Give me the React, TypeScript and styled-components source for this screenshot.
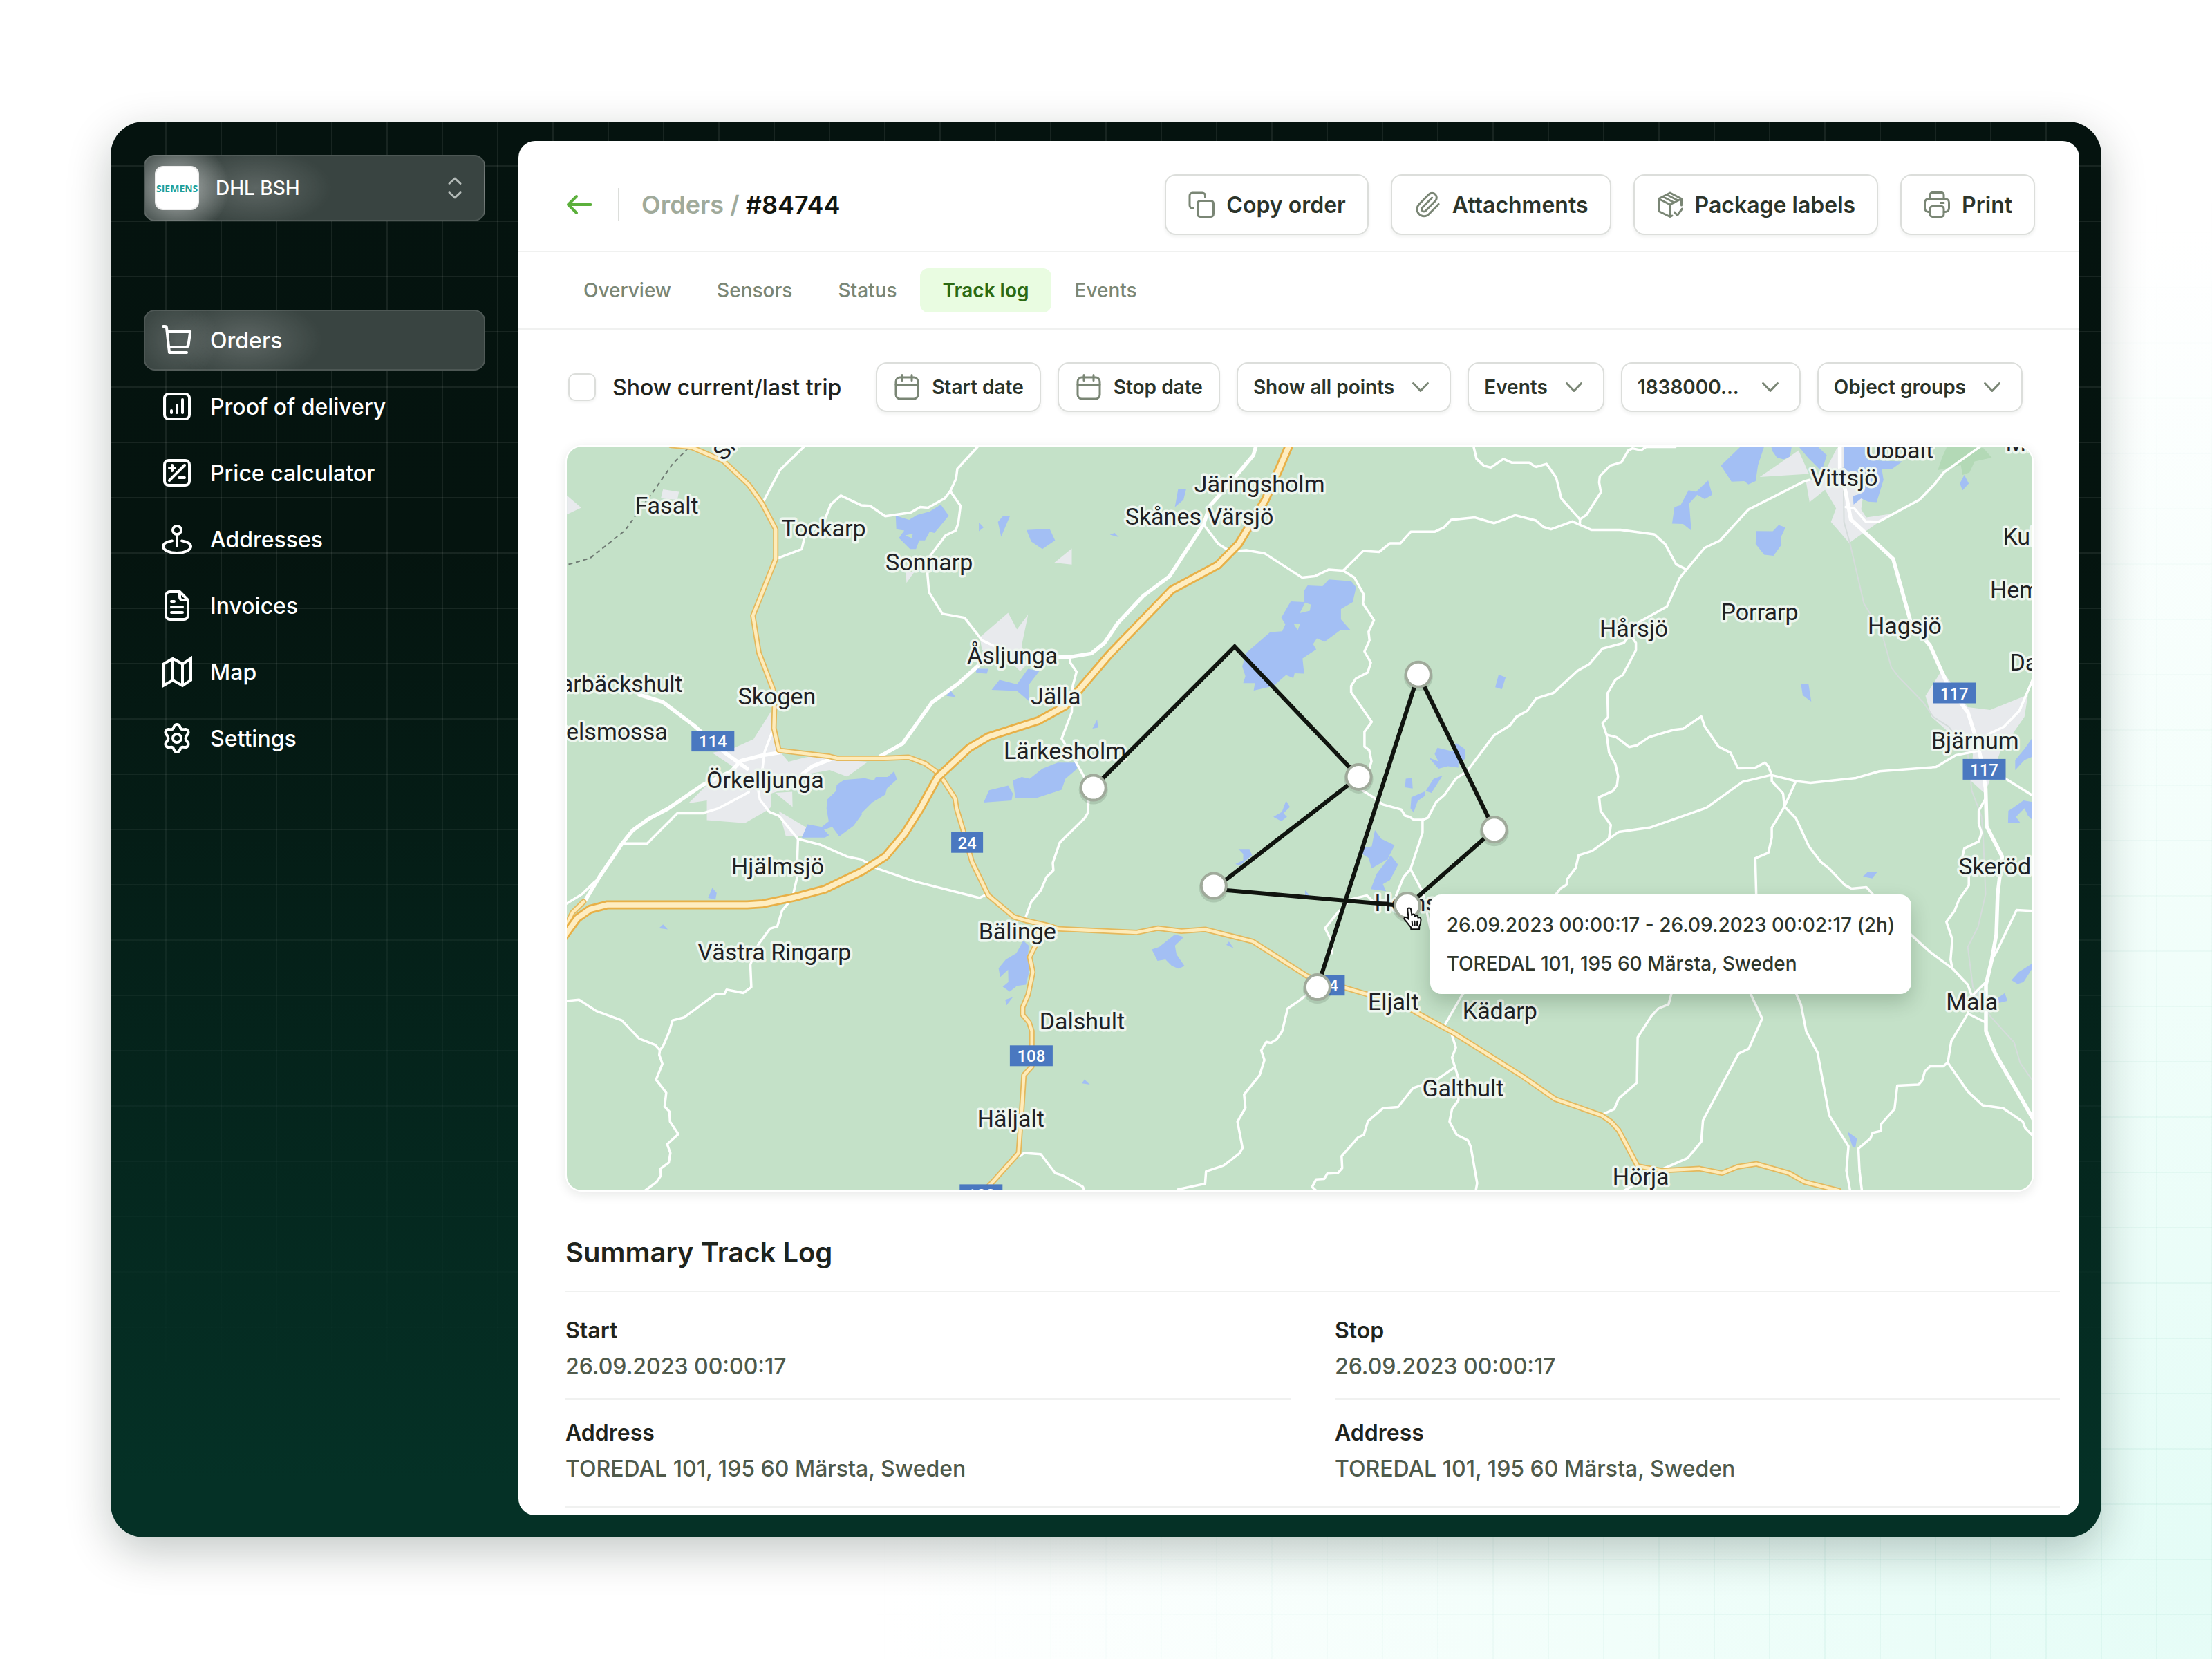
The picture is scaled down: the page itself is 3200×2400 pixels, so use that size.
import React from "react";
import styled, { createGlobalStyle, css } from "styled-components";

const color = {
  ink: "#1f241d",
  inkSoft: "#2c342a",
  muted: "#4f5a4b",
  sage: "#7a8675",
  sageLight: "#a0aa9b",
  line: "#f0f1f0",
  border: "#dcdedb",
  green: "#5cb03c",
};

const GlobalStyle = createGlobalStyle`
  *, *::before, *::after { box-sizing: border-box; }
  body {
    margin: 0;
    background: #fff;
    color: ${color.ink};
    font-family: Inter, "Liberation Sans", sans-serif;
    -webkit-font-smoothing: antialiased;
  }
  button, input, select { font: inherit; color: inherit; }
`;

/* ---------- Page shell ---------- */

const Page = styled.div`
  position: relative;
  display: flex;
  height: 100vh;
  padding: 176px 160px;
  background:
    radial-gradient(ellipse 60% 80% at 100% 94%, #e4fcf6 0%, #f1fefa 45%, rgba(255, 255, 255, 0) 100%),
    #fff;

  &::before {
    content: "";
    position: absolute;
    inset: 0;
    background-image:
      linear-gradient(to right, rgba(20, 150, 120, 0.05) 2px, transparent 2px),
      linear-gradient(to bottom, rgba(20, 150, 120, 0.05) 2px, transparent 2px);
    background-size: 80px 80px;
    background-position: -1px 15px;
    mask-image: radial-gradient(ellipse 62% 86% at 100% 96%, #000 30%, transparent 100%);
  }
`;

const Shell = styled.div`
  position: relative;
  display: flex;
  flex: 1;
  min-width: 0;
  padding: 28px 32px 32px 0;
  border-radius: 48px;
  overflow: hidden;
  background: linear-gradient(180deg, #05130f 0%, #05140f 30%, #053126 96%);

  &::before {
    content: "";
    position: absolute;
    inset: 0;
    background-image:
      linear-gradient(to right, rgba(255, 255, 255, 0.08) 2px, transparent 2px),
      linear-gradient(to bottom, rgba(255, 255, 255, 0.08) 2px, transparent 2px);
    background-size: 80px 80px;
    background-position: -1px -17px;
    mask-image: linear-gradient(180deg, #000 35%, transparent 92%);
  }
`;

const ShellShadow = styled.div`
  position: relative;
  display: flex;
  flex: 1;
  min-width: 0;
  border-radius: 48px;
  box-shadow: 0 20px 64px rgba(6, 24, 18, 0.24);
`;

/* ---------- Sidebar ---------- */

const Sidebar = styled.aside`
  position: relative;
  display: flex;
  flex: none;
  flex-direction: column;
  gap: 128px;
  width: 590px;
  padding: 20px 48px;
`;

const glass = css`
  border: 2px solid rgba(255, 255, 255, 0.1);
  background-color: #394441;
`;

const Account = styled.button`
  display: flex;
  align-items: center;
  gap: 24px;
  height: 96px;
  padding: 0 18px 0 14px;
  border-radius: 16px;
  color: #fff;
  font-size: 28px;
  font-weight: 500;
  ${glass}
  background-image:
    radial-gradient(ellipse 76px 70px at 46px 46px, rgba(255, 255, 255, 0.62), rgba(255, 255, 255, 0) 100%),
    radial-gradient(ellipse 110px 56px at 160px 46px, rgba(255, 255, 255, 0.18), rgba(255, 255, 255, 0) 100%);
`;

const AccountLogo = styled.span`
  display: grid;
  place-items: center;
  width: 64px;
  height: 64px;
  border: 2px solid #ececec;
  border-radius: 12px;
  background: #fff;
  color: #1d9f9b;
  font-family: "Open Sans", sans-serif;
  font-size: 14px;
  font-weight: 700;
`;

const AccountName = styled.span`
  flex: 1;
  text-align: left;
`;

const NavList = styled.ul`
  display: flex;
  flex-direction: column;
  gap: 8px;
  margin: 0;
  padding: 0;
  list-style: none;
`;

const NavLink = styled.a<{ $active?: boolean }>`
  display: flex;
  align-items: center;
  gap: 24px;
  height: 88px;
  padding: 0 22px;
  border: 2px solid transparent;
  border-radius: 16px;
  color: #fff;
  font-size: 32px;
  font-weight: 500;
  text-decoration: none;
  ${(p) =>
    p.$active &&
    css`
      ${glass}
      background-image:
        radial-gradient(ellipse 60px 60px at 46px 42px, rgba(255, 255, 255, 0.14), rgba(255, 255, 255, 0) 100%),
        radial-gradient(ellipse 110px 60px at 146px 42px, rgba(255, 255, 255, 0.18), rgba(255, 255, 255, 0) 100%);
    `}
`;

/* ---------- Main panel ---------- */

const Panel = styled.main`
  position: relative;
  display: flex;
  flex: 1;
  flex-direction: column;
  min-width: 0;
  overflow: hidden;
  border-radius: 24px;
  background: #fff;
`;

const Header = styled.header`
  display: flex;
  align-items: center;
  justify-content: space-between;
  gap: 32px;
  padding: 48px 64px 23px;
  border-bottom: 2px solid ${color.line};
`;

const Row = styled.div<{ $gap: number }>`
  display: flex;
  align-items: center;
  gap: ${(p) => p.$gap}px;
`;

const BackLink = styled.a`
  display: flex;
  color: ${color.green};
`;

const Separator = styled.span`
  width: 2px;
  height: 48px;
  background: ${color.border};
`;

const Title = styled.h1`
  margin: 0;
  font-size: 36px;
  font-weight: 600;
  line-height: 48px;
  color: #11150f;
`;

const Crumb = styled.a`
  color: ${color.sageLight};
  text-decoration: none;
`;

const outlined = css`
  border: 2px solid ${color.border};
  border-radius: 16px;
  background: #fff;
  color: ${color.inkSoft};
  font-weight: 600;
  white-space: nowrap;
  box-shadow: 0 3px 5px rgba(20, 30, 20, 0.06);
`;

const Button = styled.button<{ $small?: boolean }>`
  ${outlined}
  display: flex;
  align-items: center;
  gap: 16px;
  height: ${(p) => (p.$small ? 72 : 88)}px;
  padding: 0 ${(p) => (p.$small ? 23 : 31)}px;
  font-size: ${(p) => (p.$small ? 28 : 32)}px;
`;

const SelectBox = styled.label`
  ${outlined}
  display: flex;
  align-items: center;
  height: 72px;
  padding-right: 22px;
  font-size: 28px;
`;

const Select = styled.select<{ $width?: number }>`
  appearance: none;
  field-sizing: content;
  width: ${(p) => (p.$width ? `${p.$width}px` : "auto")};
  height: 100%;
  margin-right: -40px;
  padding: 0 58px 0 22px;
  border: 0;
  outline: 0;
  background: transparent;
`;

const Tabs = styled.nav`
  display: flex;
  gap: 2px;
  padding: 23px 62px;
  border-bottom: 2px solid ${color.line};
`;

const Tab = styled.a<{ $active?: boolean }>`
  padding: 0 32px;
  border-radius: 12px;
  background: ${(p) => (p.$active ? "#e9fce1" : "transparent")};
  color: ${(p) => (p.$active ? "#2b6a12" : color.sage)};
  font-size: 28px;
  font-weight: ${(p) => (p.$active ? 600 : 500)};
  line-height: 64px;
  text-decoration: none;
`;

const Filters = styled.form`
  display: flex;
  align-items: center;
  justify-content: space-between;
  padding: 47px 82px 48px 72px;
`;

const CheckLabel = styled.label`
  display: flex;
  align-items: center;
  gap: 24px;
  font-size: 32px;
  font-weight: 500;
`;

const CheckBox = styled.input`
  appearance: none;
  width: 40px;
  height: 40px;
  margin: 0;
  border: 2px solid ${color.border};
  border-radius: 10px;
  background: #fff;
  box-shadow: 0 2px 4px rgba(20, 30, 20, 0.06);
`;

/* ---------- Map ---------- */

const MapFrame = styled.section`
  position: relative;
  flex: none;
  margin: 0 66px 0 68px;
  aspect-ratio: 2124 / 1080;
  border: 2px solid #fff;
  border-radius: 24px;
  box-shadow: 0 4px 16px rgba(20, 30, 20, 0.1);
`;

const MapCanvas = styled.svg`
  display: block;
  width: 100%;
  height: 100%;
  border-radius: 22px;
  background: #c4e1c8;
`;

const PlaceLabel = styled.text`
  font-family: Roboto, sans-serif;
  font-size: 34px;
  fill: #202124;
  stroke: #eef6ef;
  stroke-width: 7px;
  stroke-linejoin: round;
  paint-order: stroke;
`;

const ShieldLabel = styled.text`
  font-family: Roboto, sans-serif;
  font-size: 24px;
  font-weight: 500;
  fill: #fff;
  text-anchor: middle;
`;

const Tooltip = styled.div`
  position: absolute;
  top: 60.2%;
  left: 58.9%;
  padding: 16px 24px;
  border-radius: 16px;
  background: #fff;
  color: #2f372c;
  font-size: 28px;
  font-weight: 500;
  line-height: 56px;
  white-space: nowrap;
  box-shadow: 0 12px 28px rgba(20, 50, 25, 0.22);
`;

/* The map is surveyed in six overlapping sheets, each with its own origin and scale. */
type Sheet = { x: number; y: number; sx: number; sy: number };
const sheets: Record<string, Sheet> = {
  A: { x: -10, y: -16, sx: 2.1778, sy: 2.8 },
  B: { x: 680, y: -16, sx: 2.1778, sy: 2.8 },
  C: { x: 1380, y: -16, sx: 2.0103, sy: 2.8 },
  D: { x: -10, y: 524, sx: 2.1778, sy: 2.7509 },
  E: { x: 680, y: 524, sx: 2.1778, sy: 2.7509 },
  F: { x: 1380, y: 524, sx: 2.0103, sy: 2.7509 },
};

function at(sheet: string, u: number, v: number): [number, number] {
  const s = sheets[sheet];
  return [Math.round((s.x + u / s.sx) * 10) / 10, Math.round((s.y + v / s.sy) * 10) / 10];
}

function trace(data: string): string {
  let sheet = "A";
  const out: string[] = [];
  data.split(/\s+/).forEach((token) => {
    if (sheets[token]) {
      sheet = token;
      return;
    }
    const [u, v] = token.split(",").map(Number);
    out.push(at(sheet, u, v).join(","));
  });
  return out.join(" ");
}

const towns = [
  "A 22,243 67,293 22,320",
  "A 325,218 375,228 370,260 318,255",
  "A 1412,718 1440,785 1475,725 1455,850 1470,930 1450,955 1430,930 1330,870 1323,818",
  "A 1090,555 1118,550 1092,597",
  "A 665,1118 672,1190 690,1275 720,1322 770,1305 830,1290 850,1310 970,1322 905,1382 850,1355 780,1372 740,1420 665,1450 665,1505 D 655,5 583,57 463,45 A 463,1478 405,1490 460,1420 550,1345 480,1285 550,1265 610,1230",
  "A 678,1448 732,1443 733,1505",
  "D 690,10 777,75 765,110 712,110",
  "B 55,515 110,458 110,523",
  "C 808,60 838,155 695,168",
  "C 905,90 920,50 940,46 940,130 1000,200 990,300 1005,332 1075,318 955,435 902,350 917,295 885,220 840,270 830,190 880,160",
  "C 1177,1055 1225,950 1300,1100 1365,1112 1475,1050 1465,1140 1395,1280 1350,1450 1310,1400 1315,1290 1195,1140",
];

const parks = ["C 1240,44 1345,50 1370,90 1320,105 1305,150 1285,160 1280,120 1213,140 1225,90"];

const lakes = [
  "A 1058,325 1100,342 1125,322 1165,308 1200,280 1225,325 1180,395 1165,390 1150,425 1132,425 1122,460 1103,460 1068,415 1085,385 1060,380",
  "A 1320,352 1335,372 1320,388",
  "A 1395,328 1418,326 1390,410 1380,350",
  "A 1470,383 1543,378 1560,425 1520,460 1485,430",
  "A 1385,990 1440,1008 1475,945 1510,955 1477,1010 1477,1075 1440,1035 1360,1030",
  "A 1310,945 1350,945 1345,965 1312,962",
  "A 1230,1032 1247,1060 1218,1055",
  "A 1335,1487 1352,1437 1412,1418 1427,1450 1423,1478",
  "A 1427,1397 1455,1383 1480,1390 1520,1350 1568,1325 B 125,1325 127,1350 90,1390 78,1435 0,1468 A 1435,1468",
  "A 842,1475 870,1440 872,1415 895,1395 960,1388 990,1397 995,1383 1033,1383 1053,1360 1062,1393 1030,1430 1025,1455 985,1485 950,1530 D 953,20 925,68 880,110 858,72 832,83 848,105 835,115 762,115 780,62 825,72 847,50 840,0",
  "D 480,315 494,335 490,362 467,355",
  "D 325,460 340,480 312,475",
  "D 1460,525 1477,545 1475,580 1480,640 1468,700 1440,705 1417,728 1395,708 1413,690 1412,640 1387,670 1382,635 1405,600 1438,575",
  "D 1403,760 1427,750 1407,782",
  "B 470,218 462,260 435,290 445,218",
  "B 230,402 245,395 258,412",
  "B 920,583 990,590 1006,615 995,675 958,703 958,745 988,788 955,790 907,835 882,822 870,845 880,867 837,903 842,965 812,963 808,983 785,970 745,1015 683,1033 687,1003 650,1003 657,975 647,935 660,880 735,797 773,793 783,765 770,738 800,672 843,675 841,630 853,608 900,610",
  "B 1455,968 1477,980 1465,1028 1444,1020",
  "B 190,1150 193,1183 175,1187",
  "B 1262,1265 1310,1280 1320,1245 1350,1272 1348,1310 1328,1325 1328,1345 1295,1340 1265,1350 1235,1305 1265,1320 1253,1290",
  "B 1162,1390 1182,1387 1184,1430 1160,1425",
  "B 1225,1440 1250,1390 1278,1378 1243,1448",
  "B 1180,1465 1222,1442 1222,1460 1200,1480 1187,1527 1177,1510",
  "B 785,1480 797,1505 777,1530 788,1545 770,1562 745,1545 772,1525",
  "E 1065,85 1085,120 1127,145 1105,200 1055,237 1045,195 1025,180 1030,155 1055,150",
  "E 1115,185 1138,222 1112,285 1090,300 1100,328 1052,320 1070,260",
  "E 635,160 670,160 678,185 640,225 625,220 650,205 650,180",
  "E 845,325 860,345 845,345",
  "E 362,560 385,550 435,500 463,510 435,545 440,580 465,625 447,637 425,625 405,600 380,605",
  "E 605,528 620,555 597,542",
  "E 150,1077 167,1098 142,1093",
  "C 640,44 708,44 690,120 683,185 662,198 650,185 613,187 582,122",
  "C 728,44 788,44 783,85 765,97 745,90 733,65",
  "C 808,44 863,44 890,80 875,145 835,90",
  "C 940,44 1015,44 1015,100 1110,105 1080,135 1050,135 1055,180 1035,270 1010,268 990,255 968,280 966,245 990,235 1000,200 940,130",
  "C 545,182 557,240 535,258 513,240 490,275 496,385 472,358 440,357 447,290 465,282 488,222 510,228",
  "C 750,363 770,372 757,410 758,443 735,487 708,483 683,440 685,387 733,388",
  "C 1290,160 1303,195 1285,222 1277,195",
  "C 815,1008 837,1008 845,1078 820,1052",
  "C 1490,1220 1490,1300 1465,1315 1438,1355 1438,1315 1465,1270",
  "C 1418,1520 1430,1510 1462,1478 1490,1485 1490,1560 1475,1540 1465,1510 1440,1545 F 1453,57 1417,57",
  "F 1010,250 1037,252 1022,277 995,270",
  "F 1488,615 1488,635 1462,690 1445,697 1427,682 1448,650",
  "F 1385,755 1408,733 1415,765 1390,773",
  "F 950,1285 978,1312 973,1350 965,1345",
];

const islands = ["B 845,677 863,685 860,710 828,720", "B 810,765 830,762 822,788", "A 1088,405 1112,398 1108,416"];

const lanes = [
  "A 770,44 693,140 640,270",
  "A 680,500 762,460 770,415 835,340 853,280 885,243 950,283 977,285 1025,327 1105,312 1135,290 1160,293 1212,255 1230,225 1248,175 1252,135 1320,40",
  "A 1230,225 1262,285 1255,355 1247,385 1215,405 1165,490 1158,560 1163,635 1205,722 1275,738 1330,830 1380,860",
  "A 595,1445 500,1510 450,1530 D 455,18 370,18 275,138 200,138",
  "A 672,1190 645,1280 638,1350 625,1440 630,1475 660,1525 D 690,28 750,120 820,143 905,190 950,202 1000,238 1120,290 1322,355 1345,340",
  "D 750,120 748,190 748,270 735,340 720,375 700,405 685,468 662,477 625,540 600,620 603,710 578,733 525,720 518,737 490,738 392,830 355,842 345,885 325,945 315,960 313,980 323,1015 303,1078 335,1130 330,1185 345,1205 347,1245 373,1295 338,1335 348,1370 343,1408 317,1432 318,1460 305,1485 268,1520",
  "D 18,765 60,760 115,805 195,842 250,915 300,940 315,960",
  "D 18,380 70,340 110,290",
  "B 525,360 572,440 610,470 660,465 717,477 835,575 875,570 920,543 965,547 1000,575 1030,645 1027,680 1062,748 1045,795 1048,830 1032,875 1052,920 1042,960 1005,985 990,1015 990,1040 1055,1160 1032,1200 1032,1260 1047,1275 1054,1320 1045,1360 1015,1430 1060,1465 1090,1495 1148,1515 1160,1540 1175,1545 1188,1557 1215,1557 E 1215,95 1177,240 1155,272 1132,345",
  "E 1177,240 1215,330 1240,480",
  "B 965,547 1028,468 1078,472 1112,437 1145,437 1178,390 1253,390 1283,372 1305,342 1380,332 1440,355 1507,323 1568,343 C 45,345 65,370 88,380 150,348 205,382 290,382 388,400 420,440 452,522 482,543",
  "B 1375,40 1385,95 1408,122 1430,130 1470,95 1497,110 1552,110 1568,125 C 45,127 75,115 103,170 118,255 172,340 172,355",
  "C 450,46 365,46 350,60 325,52 313,60 293,108 260,122 230,165 228,190 233,230 192,320 172,340",
  "C 840,180 825,185 662,300 580,425 535,455 482,543 462,578 425,693 345,755 300,840 238,863 200,925 165,953 95,1043 45,1065 B 1545,1115 1510,1140 1490,1175 1440,1215 1355,1360 1320,1390 1285,1455 1258,1485 1232,1548 1215,1557",
  "C 325,820 335,840 335,870 297,970 275,990 252,1045 254,1140 238,1165 250,1215 257,1285 275,1330 283,1380 280,1415 268,1440 228,1465 232,1520 F 262,65 257,115",
  "C 250,1212 278,1222 315,1262 338,1255 373,1222 445,1192 472,1188 525,1138 535,1178 575,1260 610,1285 632,1348 680,1347 710,1325 720,1340 730,1375 730,1400 763,1450 767,1503 F 800,38 838,150 873,212 897,238 942,303 962,318 1005,312 1030,350 1138,505 1190,570 1255,635 1300,700 1312,745",
  "C 1340,1275 1265,1295 1208,1343 1043,1360 975,1387 843,1407 800,1400 728,1375 645,1403 540,1508 F 375,75 285,92 207,168 168,185 160,235 135,280 133,303 115,318 100,345 E 1340,740 1283,865",
  "C 800,1400 767,1503 F 730,75 730,115 720,175 682,197 685,345 668,735 702,835 663,955 633,975 530,1240 525,1325 485,1390 410,1435",
  "F 340,1490 300,1520",
  "F 790,700 815,780 830,885 863,970 897,1220 953,1343 947,1440 958,1520",
  "F 445,700 430,778 400,795 380,825 340,910 338,1090 285,1153 272,1195 232,1220",
  "C 945,290 970,295 1003,348 1040,350 1160,260 1205,195 1230,150 1335,46",
  "C 1490,985 1450,1115 1405,1180 1360,1210",
  "C 1352,1470 1332,1520 F 1332,60 1340,95 1332,130 1290,158 1283,200 1303,265 1303,305 1275,360 1262,405 1238,450 1255,520 1250,600 1255,635",
  "C 1410,1390 1490,1460",
  "F 1495,407 1442,403 1385,565 1370,600",
  "F 1353,690 1312,745 1300,815 1352,850",
  "F 1300,815 1252,925 1242,1010 1228,1025 1190,1025 1175,1045 1168,1080 1157,1098 1095,1102 1087,1195 1048,1255 1048,1282 1023,1290 1017,1312 982,1352 985,1440 992,1520",
  "F 1242,1010 1300,1125 1343,1180 1403,1192 1460,1245 1467,1270 1492,1305",
  "E 1305,890 1320,950 1308,990 1330,1080 1328,1160 1308,1195 1300,1245 1323,1298 1358,1320 1367,1345 1387,1490 1383,1520",
  "E 1315,1030 1258,1080 1185,1112 1138,1187 1090,1192 1043,1243 1030,1297 1012,1308 960,1383 962,1430 948,1450 915,1452 905,1473 880,1475 867,1505 880,1520",
  "E 850,740 825,765 790,795 773,885 755,918 737,932 723,928 707,962 717,1000 702,1060 653,1137 657,1190 632,1245 648,1350 638,1372 588,1420 533,1443 530,1492 445,1515",
  "E 1060,370 1040,345 990,360 950,410 908,475 930,530 930,575",
  "D 1450,1382 1462,1370 1515,1375 E 58,1450 82,1460 145,1505 150,1520",
  "B 105,900 105,920 125,957 112,1020 110,1120 78,1228 115,1305 150,1385 163,1480 160,1530 E 150,38 72,135 50,215 52,245 30,272 D 1515,325 1485,370 1465,440",
];

const roads = [
  "A 1320,930 1255,1005 1173,1080 1080,1248 1010,1298",
  "A 250,1050 325,1080 420,1172 520,1285 590,1350",
  "A 690,1285 640,1295 570,1318 540,1360 450,1415 D 340,0 280,40 230,85 195,140 125,270 75,375",
  "A 855,1310 795,1340 765,1370",
  "B 690,44 682,80 610,190 545,285 525,360 418,570 335,650 255,760 213,840 172,883 105,897 0,900",
  "C 928,40 928,130 945,230 960,340 1083,500 1135,760 1190,850 1245,1020 1300,1120 1325,1230 1340,1320 1352,1430 F 1355,70 1400,190 1387,340 1383,500 1370,600 1353,700 1353,885 1380,975 1490,1235",
];

const rails = [
  "C 938,130 940,350 958,440 998,680 1050,800 1078,940 1100,980 1170,1080 1200,1140 1245,1180 1300,1290 1312,1440 F 1340,30 1345,120 1352,340 1330,470 1300,550 1315,710 1365,825 1435,930 1452,1010 1490,1085",
];

const trunks = [
  "D 10,490 40,412 75,370",
  "A 350,40 415,48 515,103 595,200 637,275 680,380 680,500 608,730 627,880 672,1030 676,1100 674,1185 690,1275 850,1300 875,1308 1020,1308 1098,1303 1150,1328 1195,1370 1245,1470 D 1250,0 1272,92 1298,210 1350,345 1430,430 1470,445 1530,462 E 70,478 315,492 382,475 455,487 530,480 680,528 850,665 920,700 970,712 1045,740 1180,800 1310,890 F 0,1060 100,1155 235,1220 262,1245 285,1280 340,1422 410,1440 520,1432 585,1450 630,1425 685,1413 780,1450 825,1485 925,1520",
  "D 1510,460 1500,540 1480,590 1490,650 1475,740 1458,790 1458,820 1478,850 1487,885 1487,1025 1462,1060 1455,1200 1450,1280 1445,1370 1360,1490 1330,1530",
];

const motorway =
  "D 0,530 55,435 95,400 150,382 590,382 640,378 740,352 835,320 950,250 1025,190 1085,100 1135,0 A 1190,1385 1290,1265 1350,1220 B 5,1155 90,1095 140,1020 230,885 425,625 570,525 635,440 720,260 765,130 800,25";

type Place = { name: string; sheet: string; u: number; v: number; end?: boolean };
const places: Place[] = [
  { name: "Fasalt", sheet: "A", u: 236, v: 315 },
  { name: "Tockarp", sheet: "A", u: 698, v: 408 },
  { name: "Sonnarp", sheet: "A", u: 1026, v: 545 },
  { name: "Åsljunga", sheet: "A", u: 1283, v: 923 },
  { name: "Skogen", sheet: "A", u: 561, v: 1090 },
  { name: "Örkelljunga", sheet: "A", u: 462, v: 1427 },
  { name: "arbäckshult", sheet: "A", u: 387, v: 1040, end: true },
  { name: "velsmossa", sheet: "A", u: 339, v: 1232, end: true },
  { name: "Järingsholm", sheet: "B", u: 496, v: 230 },
  { name: "Skånes Värsjö", sheet: "B", u: 278, v: 360 },
  { name: "Jälla", sheet: "B", u: 138, v: 1090, end: true },
  { name: "Lärkesholm", sheet: "B", u: 281, v: 1310, end: true },
  { name: "Ubbalt", sheet: "C", u: 1003, v: 92 },
  { name: "Mu", sheet: "C", u: 1410, v: 63 },
  { name: "Vittsjö", sheet: "C", u: 843, v: 203 },
  { name: "Kul", sheet: "C", u: 1402, v: 443 },
  { name: "Hem", sheet: "C", u: 1365, v: 658 },
  { name: "Porrarp", sheet: "C", u: 582, v: 747 },
  { name: "Hårsjö", sheet: "C", u: 229, v: 815 },
  { name: "Hagsjö", sheet: "C", u: 1009, v: 803 },
  { name: "Dal", sheet: "C", u: 1422, v: 953 },
  { name: "Bjärnum", sheet: "C", u: 1194, v: 1268 },
  { name: "Hjälmsjö", sheet: "D", u: 540, v: 260 },
  { name: "Västra Ringarp", sheet: "D", u: 434, v: 602 },
  { name: "Bälinge", sheet: "D", u: 1319, v: 520 },
  { name: "Häljalt", sheet: "D", u: 1315, v: 1265 },
  { name: "Dalshult", sheet: "E", u: 8, v: 878 },
  { name: "Horns", sheet: "E", u: 1064, v: 407 },
  { name: "Eljalt", sheet: "E", u: 1043, v: 800 },
  { name: "Kädarp", sheet: "E", u: 1341, v: 835 },
  { name: "Galthult", sheet: "E", u: 1214, v: 1145 },
  { name: "Skeröd", sheet: "F", u: 1273, v: 260 },
  { name: "Mala", sheet: "F", u: 1237, v: 800 },
  { name: "Hörja", sheet: "F", u: 267, v: 1495 },
];

/* Shields are placed by their centre. */
const shields = [
  { label: "114", sheet: "A", u: 482, v: 1238, w: 62 },
  { label: "24", sheet: "D", u: 1283, v: 134, w: 46 },
  { label: "108", sheet: "D", u: 1485, v: 983, w: 62 },
  { label: "108", sheet: "D", u: 1327, v: 1536, w: 62 },
  { label: "24", sheet: "E", u: 920, v: 702, w: 46 },
  { label: "117", sheet: "C", u: 1261, v: 1043, w: 62 },
  { label: "117", sheet: "C", u: 1348, v: 1352, w: 62 },
];

const trackLine = "B 178,1427 623,855 1014,1383 E 557,320 1167,387 1441,83 B 1202,968 E 884,710";
const stops: [string, number, number][] = [
  ["B", 178, 1427],
  ["B", 1014, 1383],
  ["E", 557, 307],
  ["E", 1167, 385],
  ["E", 1441, 83],
  ["B", 1202, 968],
  ["E", 884, 710],
];

function TrackMap() {
  const [cx, cy] = at("E", 1172, 397);
  const [sx, sy] = at("A", 514, 106);
  return (
    <MapCanvas viewBox="0 0 2120 1076" preserveAspectRatio="xMidYMid slice" role="img" aria-label="Track map">
      <g fill="#e8eaed">{towns.map((d) => <polygon key={d} points={trace(d)} />)}</g>
      <g fill="#b3d9b6">{parks.map((d) => <polygon key={d} points={trace(d)} />)}</g>
      <g fill="#a3bff4">{lakes.map((d) => <polygon key={d} points={trace(d)} />)}</g>
      <g fill="#c4e1c8">{islands.map((d) => <polygon key={d} points={trace(d)} />)}</g>
      <g fill="none" strokeLinejoin="round" strokeLinecap="round">
        <g stroke="#d5dcdb" strokeWidth="2">{rails.map((d) => <polyline key={d} points={trace(d)} />)}</g>
        <polyline
          points={trace("A 405,50 355,115 290,235 235,330 205,385 95,497 15,527")}
          stroke="#6f7a73"
          strokeWidth="2"
          strokeDasharray="6 5"
          strokeLinecap="butt"
        />
        <g stroke="#fff" strokeWidth="3.5">{lanes.map((d) => <polyline key={d} points={trace(d)} />)}</g>
        <g stroke="#fff" strokeWidth="5.5">{roads.map((d) => <polyline key={d} points={trace(d)} />)}</g>
        <g stroke="#e4b85c" strokeWidth="8">{trunks.map((d) => <polyline key={d} points={trace(d)} />)}</g>
        <g stroke="#feebb9" strokeWidth="4.5">{trunks.map((d) => <polyline key={d} points={trace(d)} />)}</g>
        <polyline points={trace(motorway)} stroke="#e8b047" strokeWidth="13" />
        <polyline points={trace(motorway)} stroke="#feedc1" strokeWidth="7.5" />
      </g>
      {shields.map((s, i) => {
        const [x, y] = at(s.sheet, s.u, s.v);
        return (
          <g key={i}>
            <rect x={x - s.w / 2} y={y - 15} width={s.w} height="30" fill="#4a78c0" />
            <ShieldLabel x={x} y={y + 9}>{s.label}</ShieldLabel>
          </g>
        );
      })}
      {places.map((p) => {
        const [x, y] = at(p.sheet, p.u, p.v);
        return (
          <PlaceLabel key={p.name} x={x} y={y} textAnchor={p.end ? "end" : "start"}>{p.name}</PlaceLabel>
        );
      })}
      <PlaceLabel x={sx} y={sy} transform={`rotate(-45 ${sx} ${sy})`}>Sk</PlaceLabel>
      <polyline points={trace(trackLine)} fill="none" stroke="#10140f" strokeWidth="6" />
      {stops.map(([sheet, u, v]) => {
        const [x, y] = at(sheet, u, v);
        return (
          <g key={`${sheet}${u}`}>
            <circle cx={x} cy={y + 3} r="21" fill="#1d3320" opacity="0.14" />
            <circle cx={x} cy={y} r="18" fill="#fff" stroke={color.sageLight} strokeWidth="4" />
          </g>
        );
      })}
      <g transform={`translate(${cx - 8} ${cy - 2})`} stroke="#111" strokeWidth="2" strokeLinejoin="round" strokeLinecap="round">
        <path
          fill="#fff"
          d="M6 3.5c0-3 4.600-3 5 0l1.200 8.300c.4-2.300 4-2.200 4.300.3l.2 1.300c.8-1.900 4.200-1.500 4.400.8l.2 1.400c1-1.400 3.900-.8 4 1.600.2 4.300-.2 7-2.300 10.600V32H11v-2.700C8.500 27 6.500 23.500 4.400 21c-2-2.300-4.800-4.500-2.300-6 2-1.200 4 .6 5.500 2.500z"
        />
        <path fill="none" d="M12.500 20.500l.6 6M16.300 20.500l.2 6M20 20.500l-.1 6" />
      </g>
    </MapCanvas>
  );
}

/* ---------- Icons ---------- */

type IconProps = { size?: number; box?: number; width?: number; tint?: string; children: React.ReactNode };
function Icon({ size = 40, box = 40, width = 3, tint = color.sage, children }: IconProps) {
  return (
    <svg
      width={size}
      height={size}
      viewBox={`0 0 ${box} ${box}`}
      fill="none"
      stroke={tint}
      strokeWidth={width}
      strokeLinecap="round"
      strokeLinejoin="round"
      aria-hidden="true"
    >
      {children}
    </svg>
  );
}

const ChevronDown = () => (
  <Icon>
    <path d="M9.500 14.500 20 25.500l10.500-11" />
  </Icon>
);

const Calendar = () => (
  <Icon>
    <rect x="4" y="6" width="32" height="31" rx="6" />
    <path d="M4 16.500h32M13 2.500v8M27 2.500v8" />
  </Icon>
);

const navItems = [
  {
    label: "Orders",
    icon: <path d="M2 2h1.300a1.200 1.200 0 0 1 1.200 1.100L6.500 21H19M5 6h16.600l-1.300 9.300a2 2 0 0 1-2 1.700H6" />,
  },
  {
    label: "Proof of delivery",
    icon: (
      <>
        <rect x="3" y="3" width="18" height="18" rx="3" />
        <path d="M8 15v1.500M12 11v5.500M16 7v9.500" />
      </>
    ),
  },
  {
    label: "Price calculator",
    icon: (
      <>
        <rect x="3" y="3" width="18" height="18" rx="3" />
        <path d="M6.500 17.500l11-11M8.500 6.500v4M6.500 8.500h4M13.500 15.500h4" />
      </>
    ),
  },
  {
    label: "Addresses",
    icon: (
      <>
        <circle cx="12" cy="5.500" r="3" />
        <path d="M12 8.500V17M8.500 13.200C4.600 13.900 2 15.400 2 17.300 2 19.900 6.500 22 12 22s10-2.100 10-4.700c0-1.900-2.600-3.400-6.500-4.100" />
      </>
    ),
  },
  {
    label: "Invoices",
    icon: (
      <>
        <path d="M14 2H7a3 3 0 0 0-3 3v14a3 3 0 0 0 3 3h10a3 3 0 0 0 3-3V8zM14 2v4a2 2 0 0 0 2 2h4" />
        <path d="M8 9h2M8 13h8M8 17h8" />
      </>
    ),
  },
  { label: "Map", icon: <path d="M2 6.500V22l7-4 7 4 6-4V2.300l-6 4-7-4zM9 2.300V18M16 6.300V22" strokeLinejoin="miter" /> },
  {
    label: "Settings",
    icon: (
      <>
        <path d="M12 2c.9 0 1.600.5 2 1.300l.5 1.200c.3.8 1.100 1.200 2 1.100l1.300-.1c.9-.1 1.700.3 2.100 1.100.5.8.4 1.700-.1 2.400l-.8 1.100c-.8 1.100-.8 2.700 0 3.800l.8 1.100c.5.7.6 1.600.1 2.400-.4.8-1.200 1.200-2.100 1.100l-1.300-.1c-.9-.1-1.700.3-2 1.100l-.5 1.200c-.4.8-1.100 1.300-2 1.300s-1.600-.5-2-1.300l-.5-1.200c-.3-.8-1.100-1.200-2-1.100l-1.300.1c-.9.1-1.700-.3-2.100-1.100-.5-.8-.4-1.700.1-2.400l.8-1.100c.8-1.100.8-2.700 0-3.800l-.8-1.100c-.5-.7-.6-1.600-.1-2.400.4-.8 1.200-1.200 2.100-1.100l1.300.1c.9.1 1.700-.3 2-1.100l.5-1.200C10.400 2.500 11.100 2 12 2z" />
        <circle cx="12" cy="12" r="3" />
      </>
    ),
  },
];

const actions = [
  {
    label: "Copy order",
    icon: (
      <Icon>
        <path d="M25.500 9.500V7a4 4 0 0 0-4-4H7a4 4 0 0 0-4 4v14a4 4 0 0 0 4 4h1.500" />
        <rect x="14.500" y="14.500" width="23" height="23" rx="4" />
      </Icon>
    ),
  },
  {
    label: "Attachments",
    icon: (
      <Icon box={24} width={1.8}>
        <path d="m16 6-8.414 8.586a2 2 0 0 0 2.829 2.829l8.414-8.586a4 4 0 1 0-5.657-5.657l-8.379 8.551a6 6 0 1 0 8.485 8.485l8.379-8.551" />
      </Icon>
    ),
  },
  {
    label: "Package labels",
    icon: (
      <Icon>
        <path d="M36.500 21V11.500L20 3 3.500 11.500v18L20 37.500l3-1.500M3.500 11.500 20 20l16.500-8.500M20 20v17.500M9.500 8.500 26 17M15 5.500l16.500 8.500M26.500 31l4 4.500 7-9.500" />
      </Icon>
    ),
  },
  {
    label: "Print",
    icon: (
      <Icon>
        <path d="M10 11.500V6a3.500 3.500 0 0 1 3.500-3.500h13A3.500 3.500 0 0 1 30 6v5.500M10 30.500H8A5.500 5.500 0 0 1 2.500 25v-8A5.500 5.500 0 0 1 8 11.500h24a5.500 5.500 0 0 1 5.500 5.500v8a5.500 5.500 0 0 1-5.500 5.500h-2M25.500 17.500H30" />
        <rect x="10" y="22.500" width="20" height="15" rx="3.500" />
      </Icon>
    ),
  },
];

const tabs = ["Overview", "Sensors", "Status", "Track log", "Events"];

const dropdowns: { label: string; value: string; width?: number }[] = [
  { label: "Points", value: "Show all points" },
  { label: "Events", value: "Events" },
  { label: "Device", value: "1838000...", width: 234 },
  { label: "Groups", value: "Object groups" },
];

/* ---------- Summary ---------- */

const Summary = styled.section`
  flex: none;
  padding: 64px 28px 0 68px;
`;

const SummaryTitle = styled.h2`
  margin: 0;
  padding-bottom: 31px;
  border-bottom: 2px solid ${color.line};
  font-size: 40px;
  font-weight: 600;
  line-height: 48px;
`;

const SummaryGrid = styled.dl`
  display: grid;
  grid-template-columns: 1fr 1fr;
  column-gap: 64px;
  margin: 0;
  padding: 8px 0;
  border-bottom: 2px solid ${color.line};
`;

const Fact = styled.div`
  display: grid;
  gap: 4px;
  padding: 24px 0 22px;
  border-bottom: 2px solid ${color.line};
  font-size: 32px;
  line-height: 48px;

  &:nth-last-child(-n + 2) {
    border-bottom: 0;
  }
`;

const FactName = styled.dt`
  font-weight: 600;
`;

const FactValue = styled.dd`
  margin: 0;
  color: ${color.muted};
  font-weight: 500;
`;

const facts = [
  ["Start", "26.09.2023 00:00:17"],
  ["Stop", "26.09.2023 00:00:17"],
  ["Address", "TOREDAL 101, 195 60 Märsta, Sweden"],
  ["Address", "TOREDAL 101, 195 60 Märsta, Sweden"],
];

export default function App() {
  return (
    <>
      <GlobalStyle />
      <Page>
        <ShellShadow>
          <Shell>
            <Sidebar>
              <Account type="button" aria-haspopup="listbox">
                <AccountLogo>SIEMENS</AccountLogo>
                <AccountName>DHL BSH</AccountName>
                <Icon size={48} box={48} tint="#b4bbb8">
                  <path d="M16 17.500 24 10l8 7.500M16 30.500 24 38l8-7.500" />
                </Icon>
              </Account>
              <nav aria-label="Main">
                <NavList>
                  {navItems.map((item, i) => (
                    <li key={item.label}>
                      <NavLink href="#" $active={i === 0}>
                        <Icon size={48} box={24} width={2} tint="#fff">{item.icon}</Icon>
                        {item.label}
                      </NavLink>
                    </li>
                  ))}
                </NavList>
              </nav>
            </Sidebar>

            <Panel>
              <Header>
                <Row $gap={32}>
                  <BackLink href="#" aria-label="Back to orders">
                    <Icon size={48} box={48} width={4} tint={color.green}>
                      <path d="M40.500 24H8M20 12 8 24l12 12" />
                    </Icon>
                  </BackLink>
                  <Separator />
                  <Title>
                    <Crumb href="#">Orders /</Crumb> #84744
                  </Title>
                </Row>
                <Row $gap={32}>
                  {actions.map((a) => (
                    <Button key={a.label} type="button">
                      {a.icon}
                      {a.label}
                    </Button>
                  ))}
                </Row>
              </Header>

              <Tabs aria-label="Order sections">
                {tabs.map((t) => (
                  <Tab key={t} href="#" $active={t === "Track log"}>{t}</Tab>
                ))}
              </Tabs>

              <Filters>
                <CheckLabel>
                  <CheckBox type="checkbox" />
                  Show current/last trip
                </CheckLabel>
                <Row $gap={24}>
                  <Button $small type="button">
                    <Calendar />
                    Start date
                  </Button>
                  <Button $small type="button">
                    <Calendar />
                    Stop date
                  </Button>
                  {dropdowns.map((d) => (
                    <SelectBox key={d.label}>
                      <Select aria-label={d.label} $width={d.width} defaultValue={d.value}>
                        <option>{d.value}</option>
                      </Select>
                      <ChevronDown />
                    </SelectBox>
                  ))}
                </Row>
              </Filters>

              <MapFrame>
                <TrackMap />
                <Tooltip role="tooltip">
                  <div>26.09.2023 00:00:17 - 26.09.2023 00:02:17 (2h)</div>
                  <div>TOREDAL 101, 195 60 Märsta, Sweden</div>
                </Tooltip>
              </MapFrame>

              <Summary>
                <SummaryTitle>Summary Track Log</SummaryTitle>
                <SummaryGrid>
                  {facts.map(([name, value], i) => (
                    <Fact key={i}>
                      <FactName>{name}</FactName>
                      <FactValue>{value}</FactValue>
                    </Fact>
                  ))}
                </SummaryGrid>
              </Summary>
            </Panel>
          </Shell>
        </ShellShadow>
      </Page>
    </>
  );
}
